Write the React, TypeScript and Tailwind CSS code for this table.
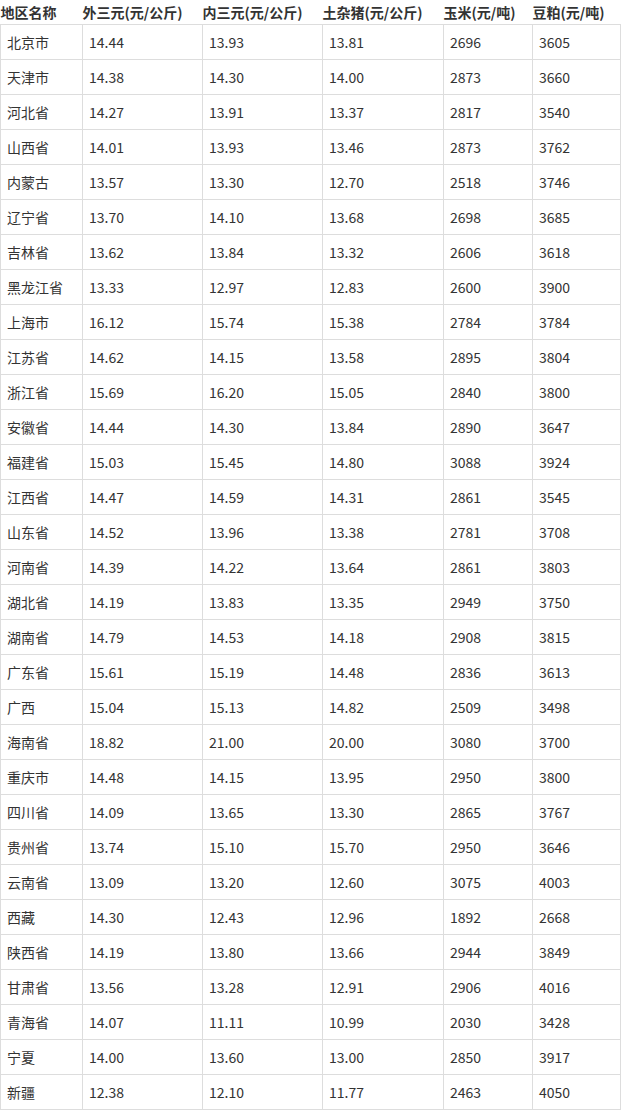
import React from 'react'

const rows: [string, string, string, string, string, string][] = [
    ['北京市', '14.44', '13.93', '13.81', '2696', '3605'],
    ['天津市', '14.38', '14.30', '14.00', '2873', '3660'],
    ['河北省', '14.27', '13.91', '13.37', '2817', '3540'],
    ['山西省', '14.01', '13.93', '13.46', '2873', '3762'],
    ['内蒙古', '13.57', '13.30', '12.70', '2518', '3746'],
    ['辽宁省', '13.70', '14.10', '13.68', '2698', '3685'],
    ['吉林省', '13.62', '13.84', '13.32', '2606', '3618'],
    ['黑龙江省', '13.33', '12.97', '12.83', '2600', '3900'],
    ['上海市', '16.12', '15.74', '15.38', '2784', '3784'],
    ['江苏省', '14.62', '14.15', '13.58', '2895', '3804'],
    ['浙江省', '15.69', '16.20', '15.05', '2840', '3800'],
    ['安徽省', '14.44', '14.30', '13.84', '2890', '3647'],
    ['福建省', '15.03', '15.45', '14.80', '3088', '3924'],
    ['江西省', '14.47', '14.59', '14.31', '2861', '3545'],
    ['山东省', '14.52', '13.96', '13.38', '2781', '3708'],
    ['河南省', '14.39', '14.22', '13.64', '2861', '3803'],
    ['湖北省', '14.19', '13.83', '13.35', '2949', '3750'],
    ['湖南省', '14.79', '14.53', '14.18', '2908', '3815'],
    ['广东省', '15.61', '15.19', '14.48', '2836', '3613'],
    ['广西', '15.04', '15.13', '14.82', '2509', '3498'],
    ['海南省', '18.82', '21.00', '20.00', '3080', '3700'],
    ['重庆市', '14.48', '14.15', '13.95', '2950', '3800'],
    ['四川省', '14.09', '13.65', '13.30', '2865', '3767'],
    ['贵州省', '13.74', '15.10', '15.70', '2950', '3646'],
    ['云南省', '13.09', '13.20', '12.60', '3075', '4003'],
    ['西藏', '14.30', '12.43', '12.96', '1892', '2668'],
    ['陕西省', '14.19', '13.80', '13.66', '2944', '3849'],
    ['甘肃省', '13.56', '13.28', '12.91', '2906', '4016'],
    ['青海省', '14.07', '11.11', '10.99', '2030', '3428'],
    ['宁夏', '14.00', '13.60', '13.00', '2850', '3917'],
    ['新疆', '12.38', '12.10', '11.77', '2463', '4050'],
]

const headers = ['地区名称', '外三元(元/公斤)', '内三元(元/公斤)', '土杂猪(元/公斤)', '玉米(元/吨)', '豆粕(元/吨)']

const App = () => {
    return (
        <div className="bg-white w-[621px] min-h-[1112px] text-[14px] text-[#333] font-['Microsoft_YaHei','Noto_Sans_CJK_SC',sans-serif]">
            <table className="table-fixed border-collapse w-[620px]">
                <colgroup>
                    <col className="w-[82px]" />
                    <col className="w-[120px]" />
                    <col className="w-[120px]" />
                    <col className="w-[121px]" />
                    <col className="w-[89px]" />
                    <col className="w-[88px]" />
                </colgroup>
                <thead>
                    <tr className="h-[24px]">
                        {headers.map((h) => (
                            <th key={h} className="p-0 text-left font-bold text-[#333] whitespace-nowrap align-middle leading-[24px]">
                                {h}
                            </th>
                        ))}
                    </tr>
                </thead>
                <tbody>
                    {rows.map((r) => (
                        <tr key={r[0]} className="h-[35px]">
                            {r.map((c, i) => (
                                <td key={i} className="border border-[#dddddd] px-[6px] py-0 align-middle whitespace-nowrap">
                                    {c}
                                </td>
                            ))}
                        </tr>
                    ))}
                </tbody>
            </table>
        </div>
    )
}

export default App
